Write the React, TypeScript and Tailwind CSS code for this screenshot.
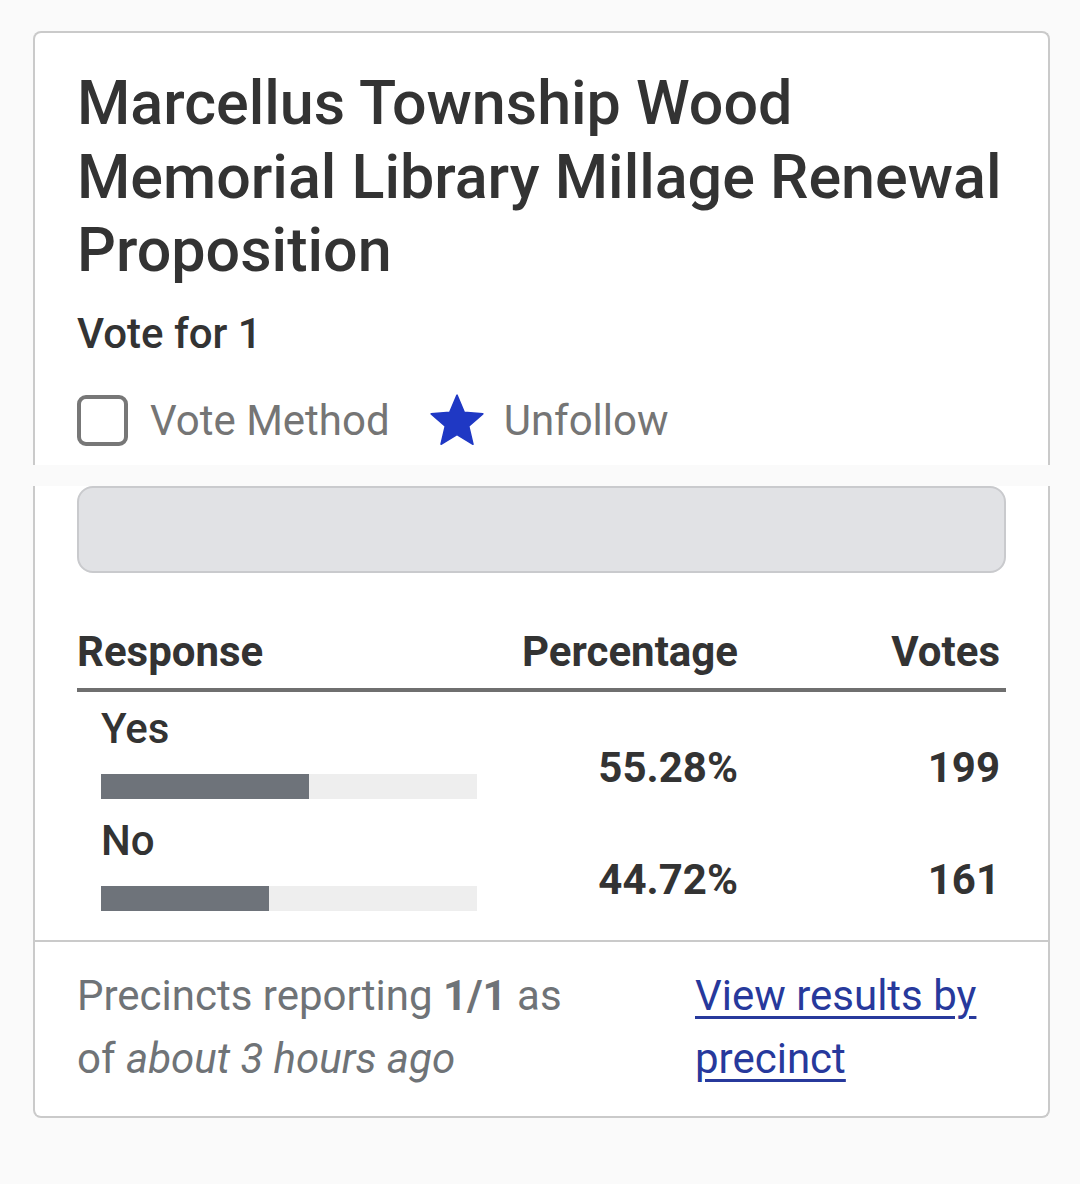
import React from "react";

type Result = {
  label: string;
  pct: number;
  votes: number;
};

const results: Result[] = [
  { label: "Yes", pct: 55.28, votes: 199 },
  { label: "No", pct: 44.72, votes: 161 },
];

function StarIcon() {
  return (
    <svg viewBox="0 0 24 24" className="w-[62px] h-[62px] -mx-[5px]">
      <path
        d="M12 17.27L18.18 21l-1.64-7.03L22 9.24l-7.19-.61L12 2 9.19 8.63 2 9.24l5.46 4.73L5.82 21z"
        fill="#1f38c4"
        stroke="#1f38c4"
        strokeWidth="0.6"
        strokeLinejoin="round"
      />
    </svg>
  );
}

function ResultRow({ label, pct, votes }: Result) {
  return (
    <div className="grid grid-cols-[419px_248px_262px]">
      <div className="pl-[24px] pt-[13px] pb-[5px]">
        <div className="text-[42px] leading-[48px] font-medium text-[#333]">
          {label}
        </div>
        <div className="mt-[21px] w-[376px] h-[25px] bg-[#eeeeee]">
          <div className="h-full bg-[#6e737a]" style={{ width: `${pct}%` }} />
        </div>
      </div>
      <div className="flex items-end justify-end pr-[6px] pb-[12px] text-[42px] leading-[48px] font-bold text-[#333]">
        {pct.toFixed(2)}%
      </div>
      <div className="flex items-end justify-end pr-[6px] pb-[12px] text-[42px] leading-[48px] font-bold text-[#333]">
        {votes}
      </div>
    </div>
  );
}

export default function App() {
  return (
    <div className="min-h-screen bg-[#fafafa] pt-[31px] pl-[33px] font-['Roboto',sans-serif]">
      <div className="w-[1017px]">
        <div className="bg-white border-2 border-b-0 border-[#cacaca] rounded-t-[8px] px-[42px] pt-[34px] pb-[13px]">
          <h2 className="text-[61px] leading-[73.5px] font-medium text-[#333]">
            Marcellus Township Wood Memorial Library Millage Renewal Proposition
          </h2>
          <div className="mt-[22px] text-[42px] leading-[48px] font-medium text-[#333]">
            Vote for 1
          </div>
          <div className="mt-[32px] flex items-center">
            <div className="w-[51px] h-[51px] border-[4px] border-[#777] rounded-[9px]" />
            <span className="ml-[22px] text-[42px] leading-[48px] text-[#757575]">
              Vote Method
            </span>
            <span className="ml-[41px] flex items-center">
              <StarIcon />
            </span>
            <span className="ml-[21px] text-[42px] leading-[48px] text-[#757575]">
              Unfollow
            </span>
          </div>
        </div>

        <div className="mt-[21px] bg-white border-2 border-t-0 border-[#cacaca] rounded-b-[8px]">
          <div className="px-[42px] pb-[24px]">
            <div className="h-[87px] bg-[#e1e2e5] border-2 border-[#c9cacd] rounded-[16px]" />

            <div className="mt-[55px] grid grid-cols-[419px_248px_262px] border-b-[4px] border-[#6f6f6f] pb-[12px] text-[42px] leading-[48px] font-bold text-[#333]">
              <div>Response</div>
              <div className="text-right pr-[6px]">Percentage</div>
              <div className="text-right pr-[6px]">Votes</div>
            </div>

            {results.map((r) => (
              <ResultRow key={r.label} {...r} />
            ))}
          </div>

          <div className="border-t-2 border-[#cacaca] px-[42px] pt-[22px] pb-[26px] flex">
            <p className="w-[520px] text-[42px] leading-[63px] text-[#6f7377]">
              Precincts reporting <span className="font-bold">1/1</span> as of{" "}
              <em>about 3 hours ago</em>
            </p>
            <a
              href="#"
              className="ml-[98px] w-[311px] text-[42px] leading-[63px] text-[#27399c] underline underline-offset-[6px] decoration-[3px]"
            >
              View results by precinct
            </a>
          </div>
        </div>
      </div>
    </div>
  );
}
